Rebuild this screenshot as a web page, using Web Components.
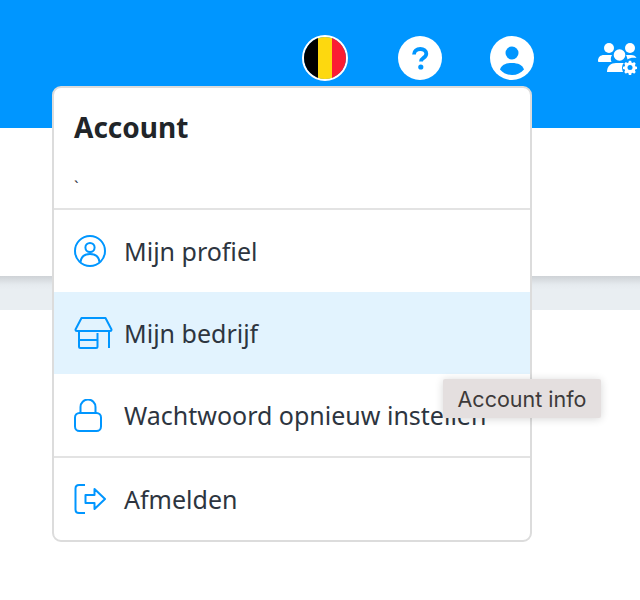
<!DOCTYPE html>
<html lang="nl">
<head>
<meta charset="utf-8">
<title>Account</title>
<style>
  html, body { margin: 0; padding: 0; background: #fff; }
  body { font-family: "Noto Sans", "Open Sans", sans-serif; position: relative; height: 600px; overflow: hidden; }
</style>
</head>
<body>
<app-header></app-header>
<page-band></page-band>
<account-menu>
  <menu-item label="Mijn profiel" icon="user"></menu-item>
  <menu-item label="Mijn bedrijf" icon="shop" active></menu-item>
  <menu-item label="Wachtwoord opnieuw instellen" icon="lock"></menu-item>
  <menu-item label="Afmelden" icon="logout" divided></menu-item>
</account-menu>
<hint-tip>Account info</hint-tip>

<script>
const ICONS = {
  user: `<circle cx="16" cy="16" r="15" /><circle cx="16" cy="12.5" r="4.6" /><path d="M6.5 27c.6-5.2 4-8 9.500-8s8.900 2.800 9.500 8" />`,
  shop: `<path d="M7.500 2h24l6 11.500c0 1-.5 1.500-1.500 1.500H3c-1 0-1.500-.5-1.500-1.500z" /><path d="M5 15v15.500c0 1 .5 1.500 1.500 1.500H22c1 0 1.500-.5 1.500-1.500V17M5 24h18.500M35 15v17" />`,
  lock: `<rect x="1" y="14" width="26" height="18" rx="4.500" /><path d="M6.500 14V8a7.500 7.500 0 0 1 15 0v6" />`,
  logout: `<path d="M11 2H5C2.800 2 1.500 3.300 1.500 5.500v21C1.500 28.700 2.800 30 5 30h6" /><path d="M11.500 12h9V6l10.500 10-10.500 10v-6h-9z" />`
};

class AppHeader extends HTMLElement {
  connectedCallback() {
    this.attachShadow({ mode: 'open' });
    this.shadowRoot.innerHTML = `
      <style>
        :host { display: block; height: 128px; background: #0096ff; }
        .bar { display: flex; align-items: center; height: 116px; padding: 0 0 0 302px; }
        .flag { width: 42px; height: 42px; border: 2px solid #fff; border-radius: 50%; display: flex; overflow: hidden; flex: none; margin-right: 50px; }
        .flag i { flex: 1; }
        svg { display: block; flex: none; }
        .help { margin-right: 48px; }
        .user { margin-right: 64px; }
      </style>
      <div class="bar">
        <div class="flag"><i style="background:#000"></i><i style="background:#fdd80f"></i><i style="background:#fb1c33"></i></div>
        <svg class="help" width="44" height="44" viewBox="0 0 44 44">
          <circle cx="22" cy="22" r="22" fill="#fff"/>
          <path d="M16 18.500c0-3.500 2.700-5.500 6.300-5.500 3.500 0 6 2 6 4.800 0 4.200-5.300 4-5.300 7.700" fill="none" stroke="#0096ff" stroke-width="3.800"/>
          <circle cx="22.800" cy="31" r="2.600" fill="#0096ff"/>
        </svg>
        <svg class="user" width="44" height="44" viewBox="0 0 44 44">
          <circle cx="22" cy="22" r="22" fill="#fff"/>
          <circle cx="22" cy="17" r="6.500" fill="#0096ff"/>
          <path d="M10 33.500C11.500 29 16 27 22 27s10.500 2 12 6.500C31 37 27 39 22 39s-9-2-12-5.500z" fill="#0096ff"/>
        </svg>
        <svg width="42" height="36" viewBox="0 0 42 36" style="margin-top:2px">
          <g fill="#fff">
            <circle cx="11" cy="7" r="5"/>
            <circle cx="32" cy="7" r="5"/>
            <circle cx="21.500" cy="14" r="5.800"/>
            <path d="M0 20c0-4 2.500-6 6-6h8c-1.500 2-1.500 5-.5 7H2c-1.200 0-2-.000-2-1z"/>
            <path d="M9 31c0-6 4-9 9-9h7c3 0 4 1 5 2l-2 7z"/>
            <path d="M28 14h5c3 0 4.500 1 5.500 3-4-.5-7 0-9 1.500-.3-1.800-.7-3-1.500-4.500z"/>
          </g>
          <circle cx="32" cy="27" r="8" fill="#0096ff"/>
          <path d="M30.500 20.500h3l.4 2 1.700.7 1.700-1.100 2.100 2.100-1.100 1.700.7 1.700 2 .4v3l-2 .4-.7 1.700 1.100 1.700-2.100 2.100-1.700-1.100-1.700.7-.4 2h-3l-.4-2-1.700-.7-1.700 1.100-2.100-2.100 1.100-1.700-.7-1.700-2-.4v-3l2-.4.7-1.700-1.100-1.700 2.100-2.100 1.700 1.100 1.700-.7z" transform="translate(0 -2.500) translate(32 29) scale(.78) translate(-32 -29)" fill="#fff"/>
          <circle cx="32" cy="26.500" r="2.500" fill="#0096ff"/>
        </svg>
      </div>
    `;
  }
}
customElements.define('app-header', AppHeader);

class PageBand extends HTMLElement {
  connectedCallback() {
    this.attachShadow({ mode: 'open' });
    this.shadowRoot.innerHTML = `
      <style>
        :host { display: block; height: 148px; background: #fff; }
        .band { margin-top: 148px; height: 34px; background: linear-gradient(#ced2d6, #e6ebef 9px, #e9eef2 14px); }
      </style>
      <div class="band"></div>
    `;
  }
}
customElements.define('page-band', PageBand);

class MenuItem extends HTMLElement {
  connectedCallback() {
    const icon = this.getAttribute('icon');
    const sizes = { user: [32, 32], shop: [40, 34], lock: [28, 33], logout: [32, 32] };
    const [w, h] = sizes[icon];
    this.attachShadow({ mode: 'open' });
    this.shadowRoot.innerHTML = `
      <style>
        :host { display: block; }
        :host([divided]) { border-top: 2px solid #e3e3e3; }
        .row { display: flex; align-items: center; height: 82px; padding-left: 20px; color: #2d3540; font-size: 25px; white-space: nowrap; }
        :host([active]) .row { background: #e2f3fe; }
        .ico { width: 50px; flex: none; display: flex; }
        svg { display: block; fill: none; stroke: #0096ff; stroke-width: 2; stroke-linejoin: round; }
      </style>
      <div class="row">
        <span class="ico"><svg width="${w}" height="${h}" viewBox="0 0 ${w} ${h}">${ICONS[icon]}</svg></span>
        <span>${this.getAttribute('label')}</span>
      </div>
    `;
  }
}
customElements.define('menu-item', MenuItem);

class AccountMenu extends HTMLElement {
  connectedCallback() {
    this.attachShadow({ mode: 'open' });
    this.shadowRoot.innerHTML = `
      <style>
        :host { position: absolute; left: 52px; top: 86px; width: 476px; display: block; background: #fff; border: 2px solid #dcdcdc; border-radius: 9px; overflow: hidden; }
        .head { height: 122px; box-sizing: border-box; padding: 19px 20px 0; border-bottom: 2px solid #e3e3e3; }
        h2 { margin: 0; font-size: 28px; line-height: 40px; font-weight: 700; color: #212529; }
        .mark { display: block; margin-top: 28px; font-size: 16px; line-height: 24px; color: #2d3540; }
      </style>
      <div class="head"><h2>Account</h2><span class="mark">&#96;</span></div>
      <slot></slot>
    `;
  }
}
customElements.define('account-menu', AccountMenu);

class HintTip extends HTMLElement {
  connectedCallback() {
    this.attachShadow({ mode: 'open' });
    this.shadowRoot.innerHTML = `
      <style>
        :host { position: absolute; left: 443px; top: 379px; width: 158px; height: 39px; box-sizing: border-box; display: flex; align-items: center; justify-content: center; background: #e4dfdf; border-radius: 2px; color: #3d3a3a; font-size: 21.500px; font-family: "Inter", sans-serif; box-shadow: 0 1px 8px rgba(0,0,0,.16); white-space: nowrap; }
      </style>
      <slot></slot>
    `;
  }
}
customElements.define('hint-tip', HintTip);
</script>
</body>
</html>
